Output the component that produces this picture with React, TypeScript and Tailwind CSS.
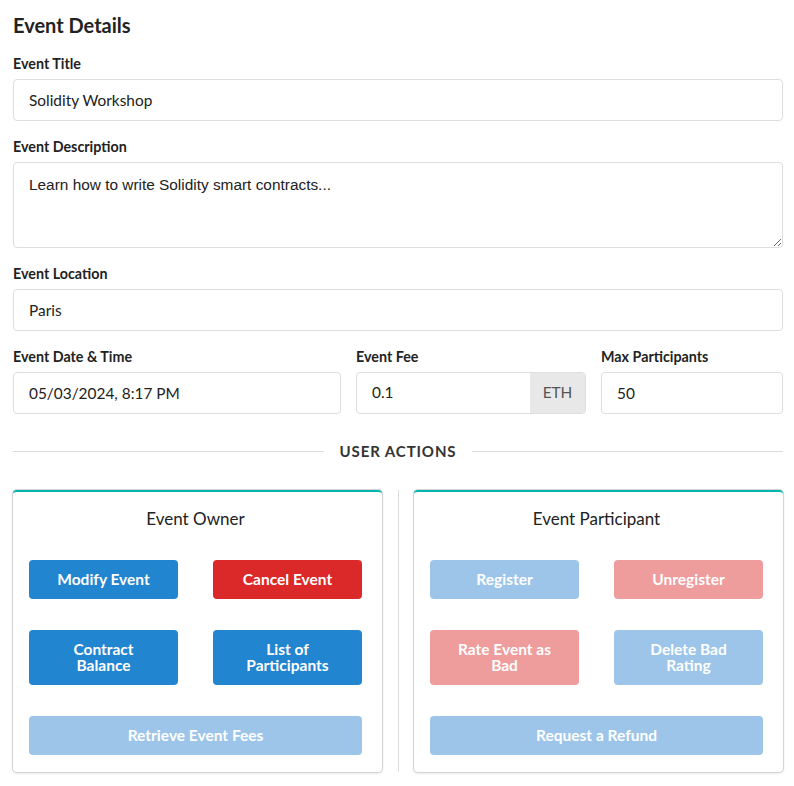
import React from "react";

const inputCls =
  "w-full h-[42px] rounded-[4px] border border-[#dedede] bg-white px-[15px] text-[15.4px] text-[#222] outline-none";

function Label({ children }: { children: React.ReactNode }) {
  return <div className="mb-[6px] text-[14.3px] font-bold leading-[18px] text-[#222]">{children}</div>;
}

function ActionButton({
  children,
  color,
  disabled,
  tall,
  wide,
}: {
  children: React.ReactNode;
  color: "blue" | "red";
  disabled?: boolean;
  tall?: boolean;
  wide?: boolean;
}) {
  const bg =
    color === "blue"
      ? disabled
        ? "bg-[#9cc5e9]"
        : "bg-[#2185d0]"
      : disabled
        ? "bg-[#ee9c9c]"
        : "bg-[#db2828]";
  return (
    <button
      className={`${bg} ${tall ? "h-[55px]" : "h-[39px]"} ${wide ? "col-span-2" : ""} flex items-center justify-center rounded-[4px] px-3 text-center text-[15.5px] font-bold leading-[16px] text-white`}
    >
      {children}
    </button>
  );
}

function Card({ title, children }: { title: string; children: React.ReactNode }) {
  return (
    <div className="rounded-[4px] border-t-2 border-t-[#00b5ad] bg-white pb-[17px] pl-4 pr-5 shadow-[0_1px_3px_0_#d4d4d5,0_0_0_1px_#d4d4d5]">
      <div className="pt-[15px] pb-[29px] text-center text-[17px] leading-[24px] text-[#222]">{title}</div>
      <div className="grid grid-cols-2 gap-x-[35px] gap-y-[31px]">{children}</div>
    </div>
  );
}

export default function App() {
  return (
    <div className="min-h-screen bg-white pl-[13px] pr-[11px] pt-[12px] font-['Lato','Noto_Sans',sans-serif] text-[#222]">
      <h2 className="mb-[17px] text-[20px] font-bold leading-[26px]">Event Details</h2>

      <Label>Event Title</Label>
      <input className={inputCls} defaultValue="Solidity Workshop" />

      <div className="mt-[17px]">
        <Label>Event Description</Label>
        <textarea
          className="block h-[86px] w-full resize-y rounded-[4px] border border-[#dedede] px-[15px] pt-[12px] font-['Liberation_Sans',Arial,sans-serif] text-[15.4px] leading-[20px] text-[#222] outline-none"
          defaultValue="Learn how to write Solidity smart contracts..."
        />
      </div>

      <div className="mt-[17px]">
        <Label>Event Location</Label>
        <input className={inputCls} defaultValue="Paris" />
      </div>

      <div className="mt-[17px] grid grid-cols-[328px_230px_1fr] gap-x-[15px]">
        <div>
          <Label>Event Date &amp; Time</Label>
          <input className={inputCls} defaultValue="05/03/2024, 8:17 PM" />
        </div>
        <div>
          <Label>Event Fee</Label>
          <div className="flex h-[42px] overflow-hidden rounded-[4px] border border-[#dedede]">
            <input className="min-w-0 flex-1 px-[15px] text-[15.4px] text-[#222] outline-none" defaultValue="0.1" />
            <span className="flex w-[55px] items-center justify-center bg-[#e8e8e8] text-[15.4px] text-[#555]">ETH</span>
          </div>
        </div>
        <div>
          <Label>Max Participants</Label>
          <input className={inputCls} defaultValue="50" />
        </div>
      </div>

      <div className="mt-[26px] flex items-center gap-4">
        <div className="h-px flex-1 bg-[#dcdcdc]" />
        <span className="text-[15px] font-bold tracking-[0.06em] text-[#333]">USER ACTIONS</span>
        <div className="h-px flex-1 bg-[#dcdcdc]" />
      </div>

      <div className="mt-[27px] grid grid-cols-[369px_1fr_369px] gap-x-[15px]">
        <Card title="Event Owner">
          <ActionButton color="blue">Modify Event</ActionButton>
          <ActionButton color="red">Cancel Event</ActionButton>
          <ActionButton color="blue" tall>
            Contract
            <br />
            Balance
          </ActionButton>
          <ActionButton color="blue" tall>
            List of
            <br />
            Participants
          </ActionButton>
          <ActionButton color="blue" disabled wide>
            Retrieve Event Fees
          </ActionButton>
        </Card>
        <div className="mx-auto w-px bg-[#dcdcdc]" />
        <Card title="Event Participant">
          <ActionButton color="blue" disabled>Register</ActionButton>
          <ActionButton color="red" disabled>Unregister</ActionButton>
          <ActionButton color="red" disabled tall>
            Rate Event as
            <br />
            Bad
          </ActionButton>
          <ActionButton color="blue" disabled tall>
            Delete Bad
            <br />
            Rating
          </ActionButton>
          <ActionButton color="blue" disabled wide>
            Request a Refund
          </ActionButton>
        </Card>
      </div>
    </div>
  );
}
